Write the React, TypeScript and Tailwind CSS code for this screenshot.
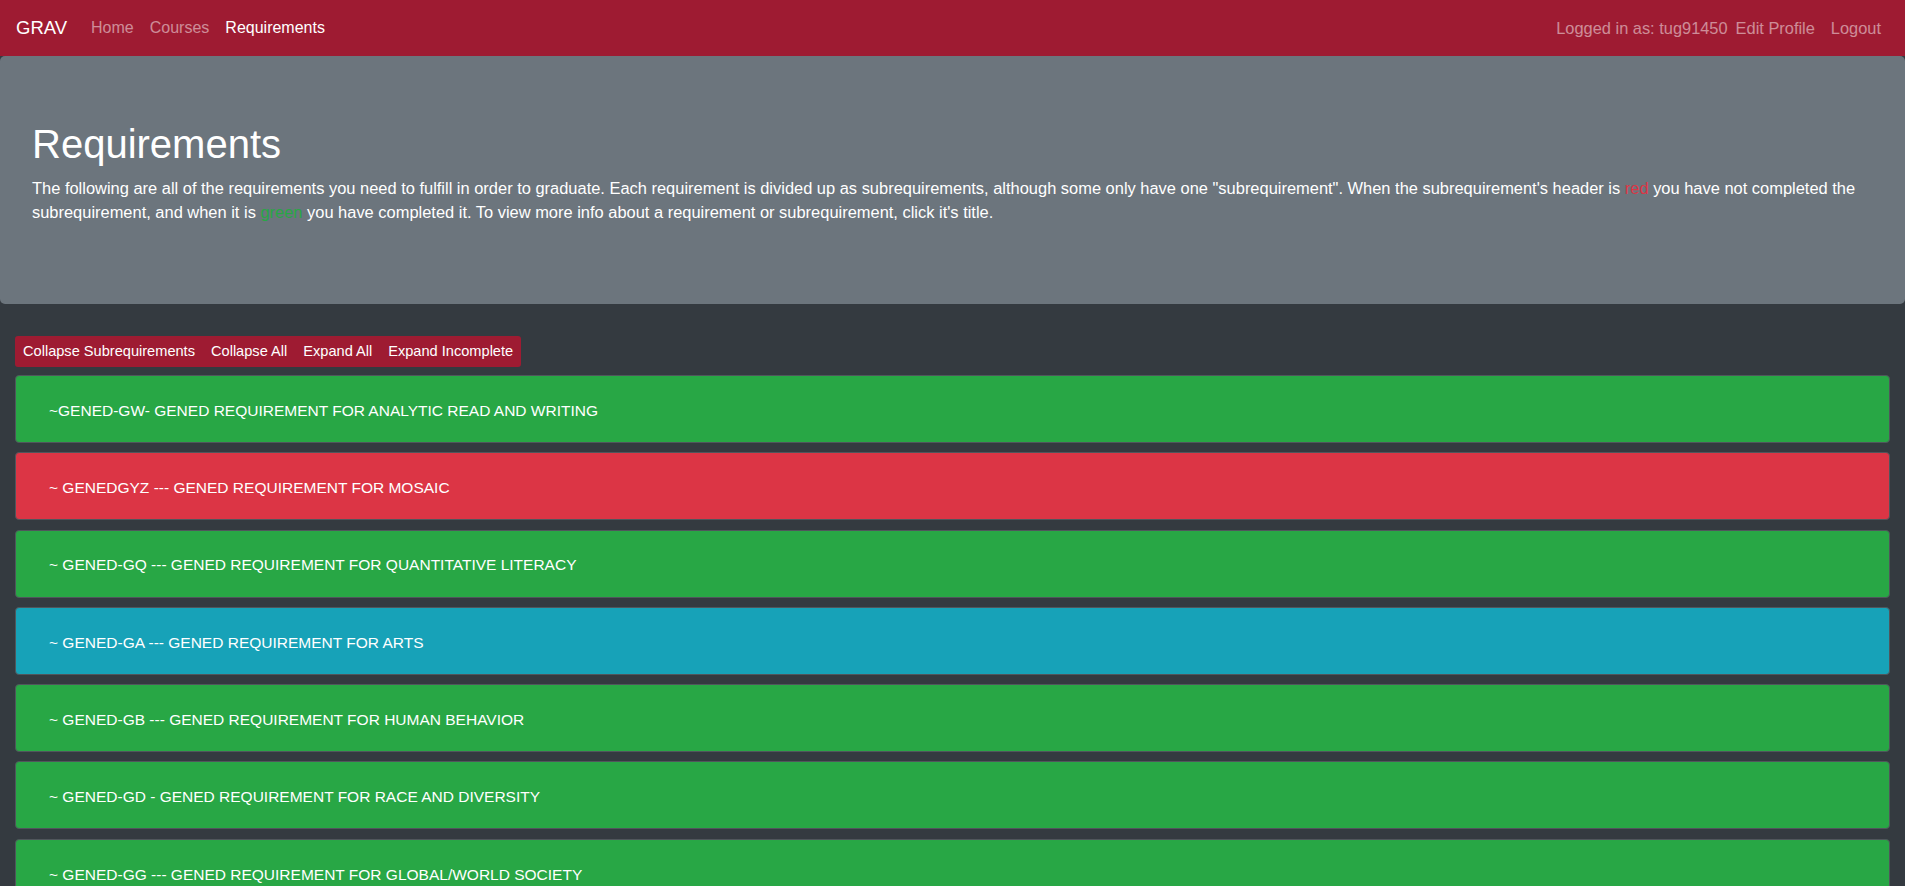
import React from "react";

type Requirement = {
  title: string;
  status: "complete" | "incomplete" | "info";
};

const requirements: Requirement[] = [
  { title: "~GENED-GW- GENED REQUIREMENT FOR ANALYTIC READ AND WRITING", status: "complete" },
  { title: "~ GENEDGYZ --- GENED REQUIREMENT FOR MOSAIC", status: "incomplete" },
  { title: "~ GENED-GQ --- GENED REQUIREMENT FOR QUANTITATIVE LITERACY", status: "complete" },
  { title: "~ GENED-GA --- GENED REQUIREMENT FOR ARTS", status: "info" },
  { title: "~ GENED-GB --- GENED REQUIREMENT FOR HUMAN BEHAVIOR", status: "complete" },
  { title: "~ GENED-GD - GENED REQUIREMENT FOR RACE AND DIVERSITY", status: "complete" },
  { title: "~ GENED-GG --- GENED REQUIREMENT FOR GLOBAL/WORLD SOCIETY", status: "complete" },
  { title: "~ GENED-GS --- GENED REQUIREMENT FOR SCIENCE & TECHNOLOGY", status: "complete" },
  { title: "~ GENED-GU --- GENED REQUIREMENT FOR U.S. SOCIETY", status: "incomplete" },
];

const headerColor = {
  complete: "bg-[#28a745]",
  incomplete: "bg-[#dc3545]",
  info: "bg-[#17a2b8]",
};

const Navbar = () => {
  return (
    <nav className="flex h-[56px] items-center justify-between bg-[#9e1b32] px-4">
      <div className="flex items-center">
        <a href="#" className="mr-4 text-[18.5px] leading-[30px] text-white">
          GRAV
        </a>
        <a href="#" className="px-2 text-[16px] text-white/50">
          Home
        </a>
        <a href="#" className="px-2 text-[16px] text-white/50">
          Courses
        </a>
        <a href="#" className="px-2 text-[16px] text-white">
          Requirements
        </a>
      </div>
      <div className="flex items-center text-[16.4px] text-white/50">
        <span>Logged in as: tug91450</span>
        <a href="#" className="px-2">
          Edit Profile
        </a>
        <a href="#" className="px-2">
          Logout
        </a>
      </div>
    </nav>
  );
};

const Jumbotron = () => {
  return (
    <div className="mb-8 rounded-[5px] bg-[#6c757d] px-8 py-16 text-white">
      <h1 className="mb-2 text-[40px] font-medium leading-[48px]">Requirements</h1>
      <p className="mb-4 text-[16.45px] leading-[24px]">
        The following are all of the requirements you need to fulfill in order to graduate. Each
        requirement is divided up as subrequirements, although some only have one
        "subrequirement". When the subrequirement's header is{" "}
        <span className="text-[#dc3545]">red</span> you have not completed the subrequirement, and
        when it is <span className="text-[#28a745]">green</span> you have completed it. To view more
        info about a requirement or subrequirement, click it's title.
      </p>
    </div>
  );
};

const App = () => {
  const buttons = ["Collapse Subrequirements", "Collapse All", "Expand All", "Expand Incomplete"];

  return (
    <div
      className="min-h-screen bg-[#343a40]"
      style={{ fontFamily: '"Liberation Sans", Arial, sans-serif' }}
    >
      <Navbar />
      <Jumbotron />
      <div className="px-[15px]">
        <div className="mb-2 inline-flex overflow-hidden rounded-[3px] bg-[#9e1b32]">
          {buttons.map((label) => (
            <button
              key={label}
              className="px-2 py-[5px] text-[14.6px] leading-[21px] text-white"
            >
              {label}
            </button>
          ))}
        </div>
        <div className="flex flex-col gap-[9.3px]">
          {requirements.map((req) => (
            <div
              key={req.title}
              className={`flex h-[68px] items-center rounded border border-[#50565c] pl-[33px] pt-[3px] ${headerColor[req.status]}`}
            >
              <span className="text-[15.5px] text-white">{req.title}</span>
            </div>
          ))}
        </div>
      </div>
    </div>
  );
};

export default App;
